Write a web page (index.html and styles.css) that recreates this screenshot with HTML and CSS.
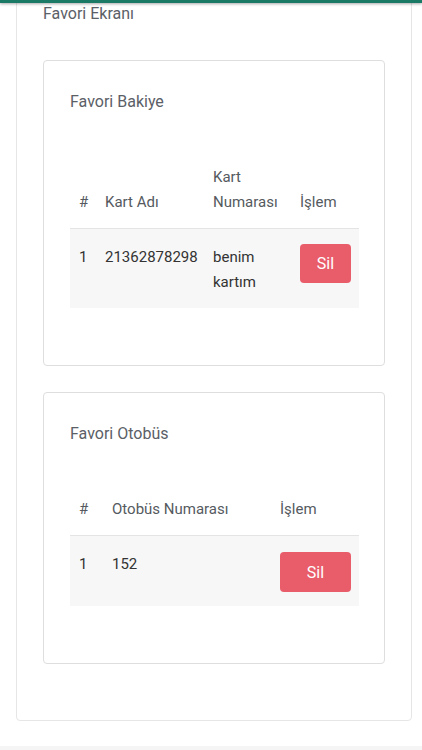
FILE: index.html
```html
<!DOCTYPE html>
<html lang="tr">
<head>
<meta charset="utf-8">
<title>Favori Ekranı</title>
<link rel="stylesheet" href="styles.css">
</head>
<body>
<div class="topbar"></div>
<div class="page">
  <div class="outer-card">
    <h1 class="page-title">Favori Ekranı</h1>

    <section class="card">
      <h2 class="card-title">Favori Bakiye</h2>
      <table class="fav-table table-bakiye">
        <thead>
          <tr>
            <th class="c-no">#</th>
            <th class="c-name">Kart Adı</th>
            <th class="c-num">Kart Numarası</th>
            <th class="c-act">İşlem</th>
          </tr>
        </thead>
        <tbody>
          <tr>
            <td>1</td>
            <td class="nowrap">21362878298</td>
            <td>benim kartım</td>
            <td><button class="btn-danger" type="button">Sil</button></td>
          </tr>
        </tbody>
      </table>
    </section>

    <section class="card">
      <h2 class="card-title">Favori Otobüs</h2>
      <table class="fav-table table-otobus">
        <thead>
          <tr>
            <th class="c-no2">#</th>
            <th class="c-bus">Otobüs Numarası</th>
            <th class="c-act2">İşlem</th>
          </tr>
        </thead>
        <tbody>
          <tr>
            <td>1</td>
            <td>152</td>
            <td><button class="btn-danger" type="button">Sil</button></td>
          </tr>
        </tbody>
      </table>
    </section>
  </div>
</div>
</body>
</html>
```

FILE: styles.css
```css
* { box-sizing: border-box; }

html, body {
  margin: 0;
  padding: 0;
}

body {
  background: #f5f5f5;
  font-family: Roboto, "Noto Sans", "Liberation Sans", sans-serif;
  color: #333;
  overflow: hidden;
}

.topbar {
  position: fixed;
  top: 0;
  left: 0;
  right: 0;
  height: 3px;
  background: #1a7a66;
  box-shadow: 0 1px 3px rgba(0, 0, 0, 0.35);
  z-index: 10;
}

.page {
  background: #fff;
  padding: 0 10px 25px 16px;
}

.outer-card {
  margin-top: -28px;
  border: 1px solid #e6e6e6;
  border-radius: 4px;
  padding: 29px 26px 56px;
  display: flex;
  flex-direction: column;
  gap: 26px;
}

.page-title {
  margin: 0 0 8px;
  font-size: 16px;
  font-weight: 400;
  line-height: 24px;
  color: #5b6067;
}

.card {
  border: 1px solid #dedede;
  border-radius: 4px;
  padding: 29px 26px 57px;
}

.card-title {
  margin: 0 0 35px;
  font-size: 16px;
  font-weight: 400;
  line-height: 24px;
  color: #5b6067;
}

.fav-table {
  width: 100%;
  border-collapse: collapse;
  table-layout: fixed;
  font-size: 15px;
  line-height: 25px;
}

.fav-table th,
.fav-table td {
  padding: 16px 8px 13px 9px;
  text-align: left;
  vertical-align: bottom;
}

.fav-table th {
  font-weight: 400;
  color: #555a60;
  border-bottom: 1px solid #e4e4e4;
}

.fav-table td {
  vertical-align: top;
  color: #333;
  background: #f7f7f7;
}

.nowrap { white-space: nowrap; }

.c-no { width: 26px; }
.c-name { width: 108px; }
.c-num { width: 87px; }
.c-act { width: 68px; }

.c-no2 { width: 33px; }
.c-bus { width: 168px; }
.c-act2 { width: 88px; }

.btn-danger {
  display: block;
  width: 100%;
  height: 39px;
  border: none;
  border-radius: 4px;
  background: #e95d6b;
  color: #fff;
  font-family: inherit;
  font-size: 16px;
  padding: 0;
}

.table-bakiye .btn-danger { margin-top: -1px; }
.table-otobus .btn-danger { height: 40px; margin-bottom: 1px; }
```
